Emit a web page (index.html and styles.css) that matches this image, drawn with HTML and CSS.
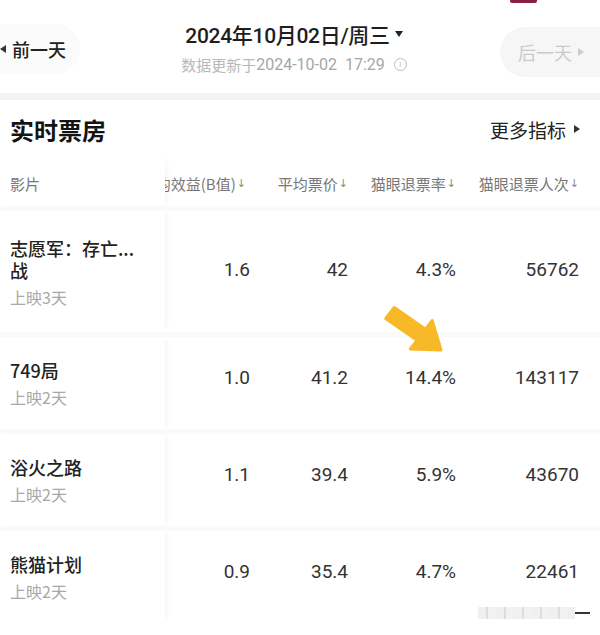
FILE: index.html
```html
<!DOCTYPE html>
<html lang="zh-CN">
<head>
<meta charset="utf-8">
<title>实时票房</title>
<link rel="stylesheet" href="styles.css">
</head>
<body>
<div class="page">
  <div class="topmark"></div>
  <header class="topbar">
    <div class="pill prev"><span class="tri tri-left"></span>前一天</div>
    <div class="datebox">
      <div class="date">2024年10月02日/周三<span class="caret"></span></div>
      <div class="updated">数据更新于<span class="ts">2024-10-02&nbsp;&nbsp;17:29</span><span class="info">i</span></div>
    </div>
    <div class="pill next">后一天<span class="tri tri-right"></span></div>
  </header>
  <div class="band"></div>
  <div class="titlerow">
    <h2 class="title">实时票房</h2>
    <div class="more">更多指标<span class="tri tri-right dark"></span></div>
  </div>
  <div class="table">
    <div class="row head">
      <div class="name-cell">影片</div>
      <div class="cell c1">场均效益(B值)<span class="arr">↓</span></div>
      <div class="cell c2">平均票价<span class="arr">↓</span></div>
      <div class="cell c3">猫眼退票率<span class="arr">↓</span></div>
      <div class="cell c4">猫眼退票人次<span class="arr">↓</span></div>
    </div>
    <div class="row tall">
      <div class="name-cell"><div class="movie">志愿军：存亡...</div><div class="movie">战</div><div class="days">上映3天</div></div>
      <div class="cell val c1">1.6</div>
      <div class="cell val c2">42</div>
      <div class="cell val c3">4.3%</div>
      <div class="cell val c4">56762</div>
    </div>
    <div class="row">
      <div class="name-cell"><div class="movie">749局</div><div class="days">上映2天</div></div>
      <div class="cell val c1">1.0</div>
      <div class="cell val c2">41.2</div>
      <div class="cell val c3">14.4%</div>
      <div class="cell val c4">143117</div>
    </div>
    <div class="row">
      <div class="name-cell"><div class="movie">浴火之路</div><div class="days">上映2天</div></div>
      <div class="cell val c1">1.1</div>
      <div class="cell val c2">39.4</div>
      <div class="cell val c3">5.9%</div>
      <div class="cell val c4">43670</div>
    </div>
    <div class="row">
      <div class="name-cell"><div class="movie">熊猫计划</div><div class="days">上映2天</div></div>
      <div class="cell val c1">0.9</div>
      <div class="cell val c2">35.4</div>
      <div class="cell val c3">4.7%</div>
      <div class="cell val c4">22461</div>
    </div>
  </div>
  <svg class="pointer" width="70" height="60" viewBox="0 0 70 60">
    <polygon points="14.3,7.5 45.5,29.2 52.2,20.5 61,50 30.3,49 37,40.3 5.7,18.5" fill="#f7b928" stroke="#f7b928" stroke-width="3" stroke-linejoin="round"/>
  </svg>
  <div class="wm"><span class="wm-blur"></span><span class="wm-dash"></span></div>
</div>
</body>
</html>
```
FILE: styles.css
```css
* { box-sizing: border-box; }
html, body { margin: 0; padding: 0; background: #fff; }
body {
  font-family: Roboto, "Noto Sans CJK SC", sans-serif;
  color: #222;
  width: 600px;
  height: 635px;
  overflow: hidden;
}
.page { position: relative; width: 600px; height: 635px; overflow: hidden; }

.topmark {
  position: absolute; left: 510px; top: 0; width: 27px; height: 3px;
  background: #8a2040; border-radius: 0 0 2px 2px;
}

.topbar {
  height: 93px;
  display: flex;
  align-items: center;
}
.pill {
  display: flex; align-items: center;
  font-size: 18px; height: 50px;
  font-family: "Noto Sans CJK SC", sans-serif;
}
.prev {
  width: 80px; padding-left: 0; gap: 6px;
  background: #fbfbfb;
  border-radius: 0 25px 25px 0;
  color: #222; font-weight: 500;
  margin-top: 4px;
}
.next {
  width: 100px; padding-left: 18px; gap: 6px;
  background: #f6f6f6;
  border-radius: 26px 0 0 26px;
  color: #cacaca;
  margin-top: 10px;
}
.tri { display: inline-block; width: 0; height: 0; }
.tri-left { border-top: 4px solid transparent; border-bottom: 4px solid transparent; border-right: 6px solid #333; }
.tri-right { border-top: 4px solid transparent; border-bottom: 4px solid transparent; border-left: 6px solid #ccc; }
.tri-right.dark { border-left-color: #333; margin-left: 8px; }

.datebox {
  flex: 1;
  display: flex; flex-direction: column; align-items: center;
  padding-left: 8px;
  gap: 5px;
}
.date {
  font-size: 21px; font-weight: 500; color: #1e1e1e;
  display: flex; align-items: center;
  letter-spacing: -0.3px;
}
.caret {
  display: inline-block; width: 0; height: 0; margin-left: 5px;
  border-left: 4px solid transparent; border-right: 4px solid transparent; border-top: 6px solid #222;
}
.updated {
  font-size: 15px; color: #b8b8b8;
  display: flex; align-items: center;
  font-family: "Noto Sans CJK SC", sans-serif;
}
.ts { font-family: Roboto, sans-serif; color: #a6a6a6; font-size: 16px; }
.info {
  display: inline-flex; align-items: center; justify-content: center;
  width: 13px; height: 13px; margin-left: 9px;
  border: 1px solid #bbb; border-radius: 50%;
  font-size: 8px; color: #bbb; font-family: Roboto, sans-serif;
}

.band { height: 7px; background: #f3f3f3; }

.titlerow {
  height: 58px;
  display: flex; align-items: center; justify-content: space-between;
  padding: 0 20px 0 10px;
}
.title {
  margin: 0; font-size: 24px; font-weight: 700; color: #141414;
  font-family: "Noto Sans CJK SC", sans-serif;
}
.more {
  display: flex; align-items: center;
  font-size: 19px; color: #222;
  font-family: "Noto Sans CJK SC", sans-serif;
}

.table { display: flex; flex-direction: column; }
.row { display: flex; height: 91px; }
.row + .row { border-top: 5px solid #fafafa; height: 97px; }
.row.head { height: 48px; }
.row.tall { height: 126px; }

.name-cell {
  position: relative; z-index: 1;
  width: 165px; flex: none;
  background: #fff;
  box-shadow: 4px 0 4px -2px rgba(0, 0, 0, 0.035);
  padding-left: 10px;
  display: flex; flex-direction: column; justify-content: center;
  font-family: "Noto Sans CJK SC", sans-serif;
}
.head .name-cell { font-size: 15px; color: #777; padding-top: 2px; }
.movie { font-size: 18px; font-weight: 500; line-height: 22px; color: #222; white-space: nowrap; }
.days { font-size: 16px; color: #a8a8a8; line-height: 20px; margin-top: 6px; }

.cell {
  flex: none;
  display: flex; align-items: center; justify-content: flex-end;
  white-space: nowrap;
}
.c1 { width: 85px; }
.c2 { width: 98px; }
.c3 { width: 108px; }
.c4 { width: 123px; }
.head .cell {
  font-size: 15px; color: #777;
  font-family: "Noto Sans CJK SC", sans-serif;
  padding-top: 2px;
}
.head .c1 { padding-right: 4px; }
.arr { font-size: 11px; color: #888; margin-left: 1px; font-family: "DejaVu Sans", sans-serif; }
.val {
  font-size: 19px; color: #333;
  padding-bottom: 12px;
  font-family: Roboto, sans-serif;
}
.row.tall .val { padding-bottom: 4px; }

.pointer { position: absolute; left: 380px; top: 300px; }

.wm {
  position: absolute; left: 478px; top: 606px;
  width: 112px; height: 14px;
  display: flex; align-items: center;
}
.wm-blur {
  width: 97px; height: 12px;
  background: repeating-linear-gradient(90deg, #ececec 0 8px, #d4d4d4 8px 10px, #eeeeee 10px 18px);
  opacity: 0.8;
}
.wm-dash { width: 15px; height: 1.5px; background: #333; }
```
